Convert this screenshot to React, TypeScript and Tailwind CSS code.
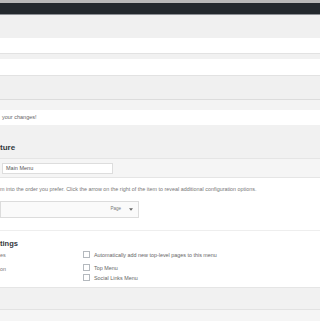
export default function App() {
  return (
    <div className="h-[321px] w-[320px] overflow-hidden bg-white font-['Liberation_Sans',Arial,sans-serif] text-[#444]">
      {/* top chrome */}
      <div className="h-[3px] bg-[#b8b8b8]" />
      <div className="h-[12px] border-b border-[#8c8f94] bg-[#23282d]" />
      <div className="h-[23px] bg-[#f0f0f0]" />
      <div className="h-[15px] bg-white" />
      <div className="h-[6px] border-t border-[#e2e2e2] bg-[#f1f1f1]" />
      <div className="h-[16px] bg-white" />
      <div className="h-[24px] border-t border-[#e2e2e2] bg-[#f0f0f0]" />

      {/* notice */}
      <div className="h-[11px] border-t border-[#dcdcdc] bg-[#f3f3f3]" />
      <div className="flex h-[15px] items-center bg-white pl-[2px] text-[5.5px] text-[#666]">your changes!</div>

      {/* menu structure heading */}
      <div className="flex h-[33px] items-end bg-[#f1f1f1] pb-[6px]">
        <span className="text-[8px] font-bold leading-none text-[#32373c]">ture</span>
      </div>
      <div className="flex h-[20px] items-center border-y border-[#e5e5e5] bg-[#f5f5f5] pl-[2px]">
        <div className="flex h-[11px] w-[111px] items-center border border-[#ddd] bg-white pl-[3px] text-[5.5px] text-[#555]">
          Main Menu
        </div>
      </div>

      {/* body */}
      <div className="h-[109px] bg-white">
        <div className="pt-[8px] text-[5.4px] leading-[6px] text-[#777] whitespace-nowrap">
          m into the order you prefer. Click the arrow on the right of the item to reveal additional configuration options.
        </div>
        <div className="mt-[9px] flex h-[17px] w-[139px] items-center justify-end border border-[#dcdcdc] bg-[#fafafa] pr-[5px] text-[4.5px] text-[#777]">
          <span>Page</span>
          <svg viewBox="0 0 6 4" className="ml-[8px] h-[3px] w-[4px]">
            <path d="M0 0h6L3 4z" fill="#666" />
          </svg>
        </div>
        <div className="mt-[12px] border-t border-[#eee]" />
        <div className="pt-[9px] text-[7.5px] font-bold leading-none text-[#32373c]">tings</div>
        <div className="mt-[3px] flex">
          <div className="w-[83px] text-[5.4px] leading-[8px] text-[#777]">es</div>
          <div className="flex items-center gap-[4px]">
            <span className="h-[7px] w-[7px] border border-[#b4b9be] bg-white" />
            <span className="text-[5.4px] text-[#666]">Automatically add new top-level pages to this menu</span>
          </div>
        </div>
        <div className="mt-[5px] flex">
          <div className="w-[83px] pt-[1px] text-[5.4px] leading-[8px] text-[#777]">on</div>
          <div className="flex flex-col gap-[2px]">
            <div className="flex items-center gap-[4px]">
              <span className="h-[7px] w-[7px] border border-[#b4b9be] bg-white" />
              <span className="text-[5.4px] text-[#666]">Top Menu</span>
            </div>
            <div className="flex items-center gap-[4px]">
              <span className="h-[7px] w-[7px] border border-[#b4b9be] bg-white" />
              <span className="text-[5.4px] text-[#666]">Social Links Menu</span>
            </div>
          </div>
        </div>
      </div>
      <div className="h-[22px] border-t border-[#e5e5e5] bg-[#f1f1f1]" />
      <div className="h-[20px] border-t border-[#e2e2e2] bg-[#f5f5f5]" />
    </div>
  )
}
